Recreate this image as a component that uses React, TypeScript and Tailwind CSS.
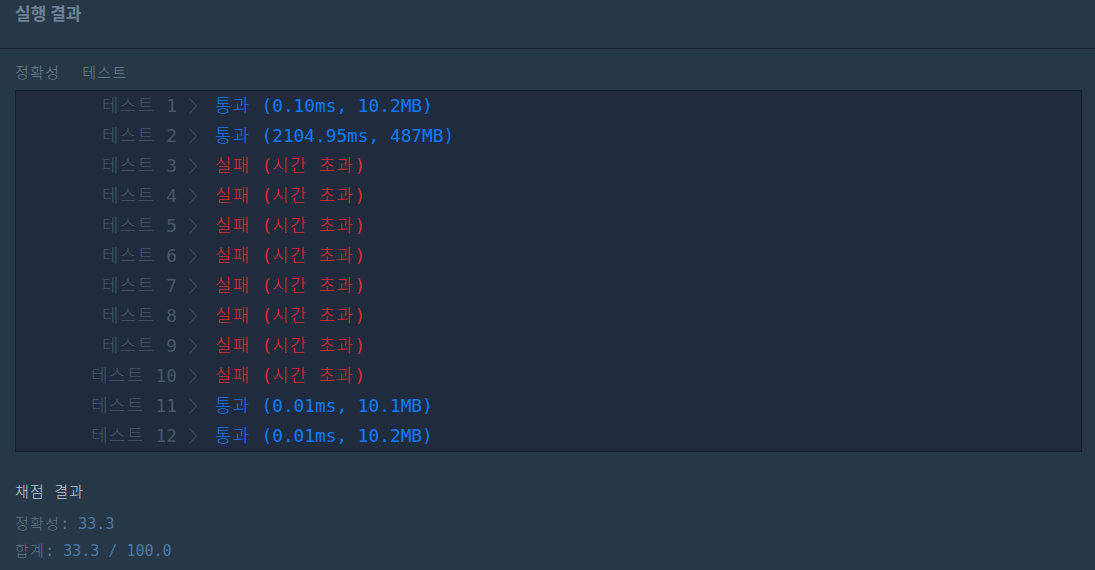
const mono = "font-['DejaVu_Sans_Mono','Noto_Sans_CJK_KR',monospace]"

type Row = { n: number; ok: boolean; detail: string }

const rows: Row[] = [
  { n: 1, ok: true, detail: '(0.10ms, 10.2MB)' },
  { n: 2, ok: true, detail: '(2104.95ms, 487MB)' },
  { n: 3, ok: false, detail: '시간 초과' },
  { n: 4, ok: false, detail: '시간 초과' },
  { n: 5, ok: false, detail: '시간 초과' },
  { n: 6, ok: false, detail: '시간 초과' },
  { n: 7, ok: false, detail: '시간 초과' },
  { n: 8, ok: false, detail: '시간 초과' },
  { n: 9, ok: false, detail: '시간 초과' },
  { n: 10, ok: false, detail: '시간 초과' },
  { n: 11, ok: true, detail: '(0.01ms, 10.1MB)' },
  { n: 12, ok: true, detail: '(0.01ms, 10.2MB)' },
]

// hangul in the fallback font is a bit narrower than the reference, widen it
function K({ children }: { children: React.ReactNode }) {
  return <span className="tracking-[0.085em] font-light">{children}</span>
}

function Chevron() {
  return (
    <svg width="10" height="18" viewBox="0 0 10 18" className="text-[#37475a]">
      <path d="M1.5 1.5 L8.5 9 L1.5 16.5" fill="none" stroke="currentColor" strokeWidth="1.2" />
    </svg>
  )
}

export default function App() {
  return (
    <div className="w-[1095px] h-[570px] overflow-hidden bg-[#263747]">
      {/* Header */}
      <div className="h-[49px] border-b border-[#172130] px-[15px]">
        <h2 className="text-[17px] leading-[25px] font-bold text-[#6f8296] font-['Noto_Sans_CJK_KR','Noto_Sans',sans-serif]">
          실행 결과
        </h2>
      </div>

      <div className="px-[15px]">
        <div className={`mt-[14px] flex gap-[22px] text-[15px] leading-[20px] text-[#6f8296] ${mono}`}>
          <K>정확성</K>
          <K>테스트</K>
        </div>

        {/* Results box */}
        <div className={`mt-[7px] mr-[-2px] border border-[#172030] bg-[#202b3d] ${mono} text-[17.8px]`}>
          {rows.map((r) => (
            <div key={r.n} className="flex items-center h-[30px]">
              <span className="w-[161px] text-right text-[#485869] whitespace-pre">
                <K>테스트</K> {r.n}
              </span>
              <span className="ml-[11px] mr-[17px] flex items-center">
                <Chevron />
              </span>
              {r.ok ? (
                <span className="whitespace-pre text-[#0f7bff]">
                  <K>통과</K> {r.detail}
                </span>
              ) : (
                <span className="whitespace-pre text-[#e02a2d]">
                  <K>실패</K> (<K>시간</K> <K>초과</K>)
                </span>
              )}
            </div>
          ))}
        </div>

        {/* Grading */}
        <div className={`mt-[30px] ${mono} text-[15px]`}>
          <div className="leading-[20px] text-[#c4ccd4]">
            <K>채점</K> <K>결과</K>
          </div>
          <div className="mt-[12px] leading-[20px] text-[#627689]">
            <K>정확성</K>: <span className="text-[#4f7aa0]">33.3</span>
          </div>
          <div className="mt-[7px] leading-[20px] text-[#627689]">
            <K>합계</K>: <span className="text-[#4f7aa0]">33.3 / 100.0</span>
          </div>
        </div>
      </div>
    </div>
  )
}
